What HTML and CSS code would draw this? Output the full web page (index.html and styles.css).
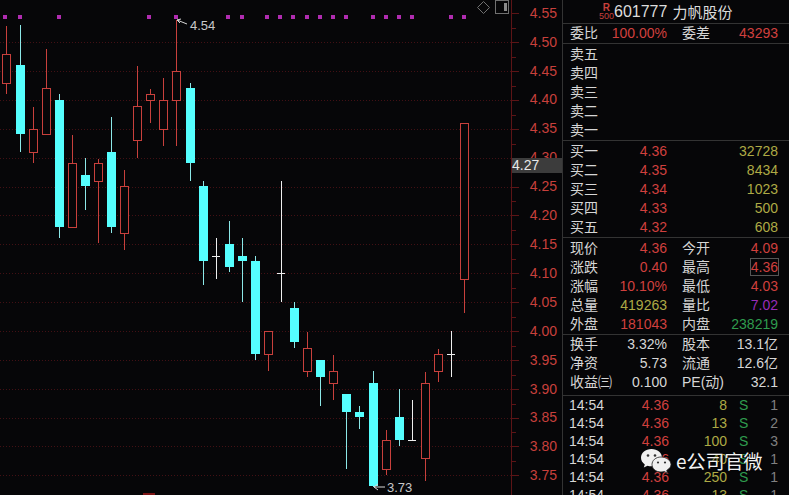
FILE: index.html
```html
<!DOCTYPE html>
<html lang="zh-CN">
<head>
  <meta charset="UTF-8" />
  <title>601777 力帆股份</title>
  <link rel="stylesheet" href="styles.css">
</head>
<body>

  <div class="terminal">
    <svg class="chart" width="562" height="495" viewBox="0 0 562 495">
      <!-- grid -->
      <path class="grid" d="M0 42.5H511M0 71.5H511M0 100.5H511M0 129.5H511M0 158.5H511M0 187.5H511M0 215.5H511M0 244.5H511M0 273.5H511M0 302.5H511M0 331.5H511M0 360.5H511M0 389.5H511M0 418.5H511M0 446.5H511M0 475.5H511" />

      <!-- signal dots -->
      <g class="dots">
        <rect x="3" y="15" width="4" height="4" /><rect x="18" y="15" width="4" height="4" /><rect x="57" y="15" width="4" height="4" />
        <rect x="147" y="15" width="4" height="4" /><rect x="174" y="15" width="4" height="4" /><rect x="226" y="15" width="4" height="4" />
        <rect x="240" y="15" width="4" height="4" /><rect x="265" y="15" width="4" height="4" /><rect x="278" y="15" width="4" height="4" />
        <rect x="291" y="15" width="4" height="4" /><rect x="305" y="15" width="4" height="4" /><rect x="318" y="15" width="4" height="4" />
        <rect x="331" y="15" width="4" height="4" /><rect x="344" y="15" width="4" height="4" /><rect x="371" y="15" width="4" height="4" />
        <rect x="384" y="15" width="4" height="4" /><rect x="397" y="15" width="4" height="4" /><rect x="410" y="15" width="4" height="4" />
        <rect x="449" y="15" width="4" height="4" /><rect x="462" y="15" width="4" height="4" />
      </g>

      <!-- candles -->
      <g class="up"><path d="M6.5 26V94" /><rect x="2.5" y="54.5" width="8" height="29" /></g>
      <g class="down"><path d="M20.5 25V152" /><rect x="16" y="65" width="9" height="69" /></g>
      <g class="up"><path d="M33.5 107V163" /><rect x="29.5" y="129.5" width="8" height="23" /></g>
      <g class="up"><path d="M46.5 49V135" /><rect x="42.5" y="88.5" width="8" height="46" /></g>
      <g class="down"><path d="M59.5 94V238" /><rect x="55" y="100" width="9" height="127" /></g>
      <g class="up"><path d="M72.5 135V228" /><rect x="68.5" y="163.5" width="8" height="64" /></g>
      <g class="down"><path d="M85.5 158V210" /><rect x="81" y="175" width="9" height="11" /></g>
      <g class="up"><path d="M98.5 159V243" /><rect x="94.5" y="163.5" width="8" height="18" /></g>
      <g class="down"><path d="M111.5 117V233" /><rect x="107" y="152" width="9" height="75" /></g>
      <g class="up"><path d="M124.5 170V250" /><rect x="120.5" y="186.5" width="8" height="47" /></g>
      <g class="up"><path d="M137.5 66V158" /><rect x="133.5" y="106.5" width="8" height="34" /></g>
      <g class="up"><path d="M150.5 89V123" /><rect x="146.5" y="94.5" width="8" height="6" /></g>
      <g class="up"><path d="M163.5 78V146" /><rect x="159.5" y="100.5" width="8" height="29" /></g>
      <g class="up"><path d="M176.5 20V146" /><rect x="172.5" y="71.5" width="8" height="29" /></g>
      <g class="down"><path d="M190.5 83V181" /><rect x="186" y="88" width="9" height="75" /></g>
      <g class="down"><path d="M203.5 181V285" /><rect x="199" y="186" width="9" height="75" /></g>
      <path class="flat" d="M216.5 238V279M212 256.5H220" />
      <g class="down"><path d="M229.5 221V272" /><rect x="225" y="244" width="9" height="23" /></g>
      <g class="down"><path d="M242.5 238V302" /><rect x="238" y="256" width="9" height="5" /></g>
      <g class="down"><path d="M255.5 256V360" /><rect x="251" y="261" width="9" height="93" /></g>
      <g class="up"><path d="M268.5 331V371" /><rect x="264.5" y="331.5" width="8" height="23" /></g>
      <path class="flat" d="M281.5 181V302M277 273.5H285" />
      <g class="down"><path d="M294.5 302V348" /><rect x="290" y="308" width="9" height="34" /></g>
      <g class="up"><path d="M307.5 332V377" /><rect x="303.5" y="348.5" width="8" height="23" /></g>
      <g class="down"><path d="M320.5 360V406" /><rect x="316" y="360" width="9" height="17" /></g>
      <g class="up"><path d="M333.5 355V400" /><rect x="329.5" y="371.5" width="8" height="12" /></g>
      <g class="down"><path d="M346.5 394V469" /><rect x="342" y="394" width="9" height="18" /></g>
      <g class="down"><path d="M359.5 406V429" /><rect x="355" y="412" width="9" height="5" /></g>
      <g class="down"><path d="M373.5 371V487" /><rect x="369" y="383" width="9" height="103" /></g>
      <g class="up"><path d="M386.5 430V475" /><rect x="382.5" y="440.5" width="8" height="29" /></g>
      <g class="down"><path d="M399.5 389V446" /><rect x="395" y="417" width="9" height="23" /></g>
      <path class="flat" d="M412.5 400V440M408 440.5H416" />
      <g class="up"><path d="M425.5 372V481" /><rect x="421.5" y="383.5" width="8" height="75" /></g>
      <g class="up"><path d="M438.5 349V382" /><rect x="434.5" y="354.5" width="8" height="17" /></g>
      <path class="flat" d="M451.5 331V377M447 354.5H455" />
      <g class="up"><path d="M464.5 123V313" /><rect x="460.5" y="123.5" width="8" height="156" /></g>
      <rect class="stub" x="143" y="493" width="12" height="2" />

      <!-- high / low notes -->
      <path class="note-line" d="M187 24L177 20M177 20L181 19M177 20L180 23" />
      <text class="note" x="190" y="30">4.54</text>
      <path class="note-line" d="M385 487H374M374 487L378 484M374 487L378 490" />
      <text class="note" x="387" y="492">3.73</text>

      <!-- corner buttons -->
      <path class="btn" d="M483.5 1.5L489.5 7.5L483.5 13.5L477.5 7.5Z" />
      <rect class="btn" x="495.5" y="0.5" width="13" height="13" />
      <rect class="btn-fill" x="504" y="3" width="3" height="8" />

      <!-- price axis -->
      <path class="axis" d="M511.5 0V495" />
      <path class="axis" d="M511 13.5H519M511 42.5H519M511 71.5H519M511 100.5H519M511 129.5H519M511 187.5H519M511 215.5H519M511 244.5H519M511 273.5H519M511 302.5H519M511 331.5H519M511 360.5H519M511 389.5H519M511 418.5H519M511 446.5H519M511 475.5H519" />
      <path class="axis" d="M511 28.5H516M511 57.5H516M511 86.5H516M511 115.5H516M511 144.5H516M511 201.5H516M511 230.5H516M511 259.5H516M511 288.5H516M511 317.5H516M511 346.5H516M511 375.5H516M511 404.5H516M511 432.5H516M511 461.5H516" />
      <g class="axis-text">
        <text x="557" y="18">4.55</text>
        <text x="557" y="47">4.50</text>
        <text x="557" y="76">4.45</text>
        <text x="557" y="104">4.40</text>
        <text x="557" y="133">4.35</text>
        <text x="557" y="162">4.30</text>
        <text x="557" y="191">4.25</text>
        <text x="557" y="220">4.20</text>
        <text x="557" y="249">4.15</text>
        <text x="557" y="278">4.10</text>
        <text x="557" y="307">4.05</text>
        <text x="557" y="336">4.00</text>
        <text x="557" y="365">3.95</text>
        <text x="557" y="394">3.90</text>
        <text x="557" y="422">3.85</text>
        <text x="557" y="451">3.80</text>
        <text x="557" y="480">3.75</text>
      </g>
      <rect class="cursor" x="512" y="158" width="50" height="15" />
      <text class="cursor-text" x="512" y="170">4.27</text>
    </svg>

    <div class="panel">
      <div class="title">
        <div class="rank"><span class="rank-r">R</span><span class="rank-n">500</span></div>
        <span class="code">601777</span><span class="name">力帆股份</span>
      </div>

      <div class="section">
        <div class="row"><span>委比</span><b class="red">100.00%</b><i></i><span>委差</span><b class="red">43293</b></div>
      </div>

      <div class="section pad">
        <div class="row"><span>卖五</span></div>
        <div class="row"><span>卖四</span></div>
        <div class="row"><span>卖三</span></div>
        <div class="row"><span>卖二</span></div>
        <div class="row"><span>卖一</span></div>
      </div>

      <div class="section pad">
        <div class="row"><span>买一</span><b class="red">4.36</b><i></i><span></span><b class="yellow">32728</b></div>
        <div class="row"><span>买二</span><b class="red">4.35</b><i></i><span></span><b class="yellow">8434</b></div>
        <div class="row"><span>买三</span><b class="red">4.34</b><i></i><span></span><b class="yellow">1023</b></div>
        <div class="row"><span>买四</span><b class="red">4.33</b><i></i><span></span><b class="yellow">500</b></div>
        <div class="row"><span>买五</span><b class="red">4.32</b><i></i><span></span><b class="yellow">608</b></div>
      </div>

      <div class="section pad">
        <div class="row"><span>现价</span><b class="red">4.36</b><i></i><span>今开</span><b class="red">4.09</b></div>
        <div class="row"><span>涨跌</span><b class="red">0.40</b><i></i><span>最高</span><b class="red"><em class="boxed">4.36</em></b></div>
        <div class="row"><span>涨幅</span><b class="red">10.10%</b><i></i><span>最低</span><b class="red">4.03</b></div>
        <div class="row"><span>总量</span><b class="yellow">419263</b><i></i><span>量比</span><b class="purple">7.02</b></div>
        <div class="row"><span>外盘</span><b class="red">181043</b><i></i><span>内盘</span><b class="green">238219</b></div>
      </div>

      <div class="section finance">
        <div class="row"><span>换手</span><b>3.32%</b><i></i><span>股本</span><b>13.1亿</b></div>
        <div class="row"><span>净资</span><b>5.73</b><i></i><span>流通</span><b>12.6亿</b></div>
        <div class="row"><span>收益㈢</span><b>0.100</b><i></i><span>PE(动)</span><b>32.1</b></div>
      </div>

      <div class="ticks">
        <div class="tick"><span>14:54</span><b class="red">4.36</b><b class="yellow">8</b><em class="green">S</em><b class="gray">1</b></div>
        <div class="tick"><span>14:54</span><b class="red">4.36</b><b class="yellow">13</b><em class="green">S</em><b class="gray">2</b></div>
        <div class="tick"><span>14:54</span><b class="red">4.36</b><b class="yellow">100</b><em class="green">S</em><b class="gray">3</b></div>
        <div class="tick"><span>14:54</span><b class="red">4.36</b><b class="yellow">40</b><em class="green">S</em><b class="gray">1</b></div>
        <div class="tick"><span>14:54</span><b class="red">4.36</b><b class="yellow">250</b><em class="green">S</em><b class="gray">1</b></div>
        <div class="tick"><span>14:54</span><b class="red">4.36</b><b class="yellow">13</b><em class="green">S</em><b class="gray">1</b></div>
      </div>
    </div>

    <div class="watermark">
      <svg width="32" height="26" viewBox="0 0 32 26">
        <path class="bubble" d="M11.5 1C5.5 1 1 4.900 1 9.700C1 12.500 2.500 14.800 4.800 16.400L3.800 19.600L7.500 17.700C8.800 18.100 10 18.300 11.500 18.300C17.500 18.300 22 14.500 22 9.700C22 4.900 17.500 1 11.500 1Z" />
        <path class="bubble edge" d="M21 9C15.800 9 12 12.400 12 16.500C12 20.600 15.800 24 21 24C22.200 24 23.200 23.800 24.300 23.500L27.500 25.200L26.700 22.400C29.300 20.800 31 18.800 31 16.500C31 12.400 26.200 9 21 9Z" />
        <circle class="eye" cx="8" cy="7.500" r="1.300" /><circle class="eye" cx="15" cy="7.500" r="1.300" />
        <circle class="eye" cx="18" cy="14.500" r="1.100" /><circle class="eye" cx="25" cy="14.500" r="1.100" />
      </svg>
      <span>e公司官微</span>
    </div>
  </div>

</body>
</html>
```

FILE: styles.css
```css
/* Reset & basics */
* {
  box-sizing: border-box;
}
html, body {
  margin: 0;
  height: 100%;
  overflow: hidden;
  background: #060608;
}
body {
  font-family: "Liberation Sans", "Noto Sans CJK SC", sans-serif;
  font-size: 14px;
  color: #d6d6d6;
}
.terminal {
  position: relative;
  display: flex;
  width: 789px;
  height: 495px;
  overflow: hidden;
}

/* Chart */
.chart {
  display: block;
  flex: none;
}
.grid {
  fill: none;
  stroke: #421014;
  stroke-dasharray: 1 2;
}
.dots rect {
  fill: #b02cb0;
}
.up path {
  fill: none;
  stroke: #c8403c;
}
.up rect {
  fill: #060608;
  stroke: #c8403c;
}
.down path {
  fill: none;
  stroke: #8ce8e8;
}
.down rect {
  fill: #55ffff;
}
.flat {
  fill: none;
  stroke: #eeeeee;
}
.stub {
  fill: #7c1414;
}
.note {
  font-size: 13px;
  fill: #c8c8c8;
}
.note-line {
  fill: none;
  stroke: #d8d8d8;
}
.btn {
  fill: none;
  stroke: #707070;
}
.btn-fill {
  fill: #8a8a8a;
}
.axis {
  fill: none;
  stroke: #5c1416;
}
.axis-text text {
  font-size: 14px;
  fill: #c8403c;
  text-anchor: end;
}
.cursor {
  fill: #3c3c3c;
}
.cursor-text {
  font-size: 14px;
  fill: #e8e8e8;
}

/* Quote panel */
.panel {
  flex: 1;
  min-width: 0;
  border-left: 1px solid #333;
}
.title {
  display: flex;
  align-items: center;
  height: 24px;
  padding-left: 36px;
  border-bottom: 1px solid #333;
}
.rank {
  display: flex;
  flex-direction: column;
  align-items: flex-end;
  width: 15px;
  line-height: 9px;
}
.rank-r {
  font-size: 10px;
  font-weight: 700;
  color: #c8403c;
  margin-right: 4px;
}
.rank-n {
  font-size: 9px;
  color: #c8403c;
}
.code {
  font-size: 16px;
  margin-right: 5px;
  color: #dcdcdc;
}
.name {
  font-size: 15px;
  color: #dcdcdc;
}
.section {
  border-bottom: 1px solid #333;
}
.pad {
  padding-top: 1px;
}
.finance {
  padding-bottom: 3px;
}
.row {
  display: grid;
  grid-template-columns: 28px 69px 15px 28px 68px;
  align-items: center;
  height: 19px;
  padding-left: 7px;
  line-height: 19px;
  white-space: nowrap;
}
b {
  font-weight: 400;
  text-align: right;
}
em {
  font-style: normal;
}
.boxed {
  display: inline-block;
  height: 18px;
  line-height: 16px;
  margin-right: -1px;
  border: 1px solid #555;
}
.ticks {
  padding: 0 11px 0 6px;
}
.tick {
  display: grid;
  grid-template-columns: 36px 64px 58px 20px 31px;
  align-items: center;
  height: 18px;
  line-height: 18px;
}
.tick em {
  padding-left: 12px;
}
.red { color: #d0403e; }
.yellow { color: #aeaa45; }
.green { color: #2f9c4e; }
.purple { color: #9a2cb8; }
.gray { color: #808080; }

/* Watermark */
.watermark {
  position: absolute;
  left: 640px;
  top: 447px;
  display: flex;
  align-items: center;
  gap: 4px;
  font-family: "Noto Sans CJK SC", sans-serif;
  font-size: 19px;
  color: #f2f2f2;
  text-shadow: 0 0 2px #000;
}
.watermark svg {
  display: block;
}
.bubble {
  fill: #f0f0f0;
}
.bubble.edge {
  stroke: #222;
  stroke-width: 0.8;
}
.eye {
  fill: #333;
}
```
